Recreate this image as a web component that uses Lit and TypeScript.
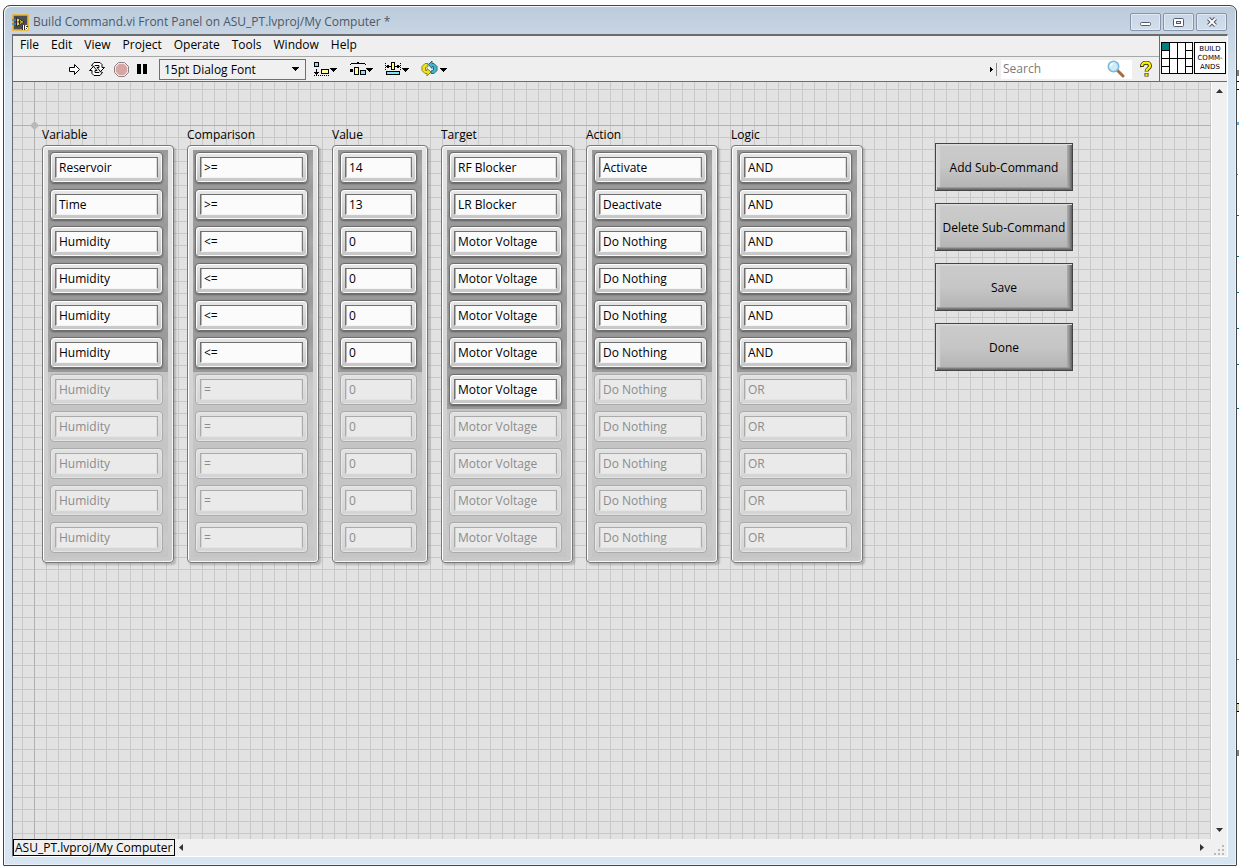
import { LitElement, html, css, svg } from "lit";
import { customElement, property } from "lit/decorators.js";

interface Column {
  id: string;
  label: string;
  narrow?: boolean;
  active: number;
  values: string[];
}

const fill = (first: string[], rest: [string, number][]): string[] => [
  ...first,
  ...rest.flatMap(([text, n]) => Array<string>(n).fill(text)),
];

const COLUMNS: Column[] = [
  { id: "variable", label: "Variable", active: 6, values: fill(["Reservoir", "Time"], [["Humidity", 9]]) },
  { id: "comparison", label: "Comparison", active: 6, values: fill([">=", ">="], [["<=", 4], ["=", 5]]) },
  { id: "value", label: "Value", narrow: true, active: 6, values: fill(["14", "13"], [["0", 9]]) },
  { id: "target", label: "Target", active: 7, values: fill(["RF Blocker", "LR Blocker"], [["Motor Voltage", 9]]) },
  { id: "action", label: "Action", active: 6, values: fill(["Activate", "Deactivate"], [["Do Nothing", 9]]) },
  { id: "logic", label: "Logic", active: 6, values: fill([], [["AND", 6], ["OR", 5]]) },
];

const MENUS = ["File", "Edit", "View", "Project", "Operate", "Tools", "Window", "Help"];
const COMMANDS = ["Add Sub-Command", "Delete Sub-Command", "Save", "Done"];

const caret = svg`<path d="M0 0h7v1h-1v1h-1v1h-1v1h-1v-1h-1v-1h-1v-1h-1z" fill="#000"/>`;

@customElement("array-column")
class ArrayColumn extends LitElement {
  @property({ attribute: false }) column!: Column;

  static styles = css`
    :host { display: block; font: 12px/20px "Open Sans", "Noto Sans", sans-serif; color: #000; }
    .label { height: 20px; white-space: nowrap; }
    .panel {
      box-sizing: border-box;
      width: 132px;
      padding: 4px 5px 5px;
      border: 1px solid #777;
      border-radius: 4px;
      background: linear-gradient(#e4e4e4, #c8c8c8);
      box-shadow: inset 1px 1px 0 #fff, inset -1px -1px 0 #f6f6f6, 2px 2px 2px #0003;
    }
    .narrow { width: 96px; }
    .cell {
      box-sizing: border-box;
      height: 37px;
      padding: 2px 5px 4px 2px;
      background: linear-gradient(#c4c4c4, #cacaca 50%, #c4c4c4);
    }
    .on { background: linear-gradient(#999, #a8a8a8 50%, #9a9a9a); }
    .bezel {
      box-sizing: border-box;
      height: 31px;
      padding: 4px;
      border: 1px solid #aaa;
      border-radius: 4px;
      background: linear-gradient(#e2e2e2, #d4d4d4);
      box-shadow: inset 1px 1px 0 #e8e8e8, inset -1px -1px 0 #e4e4e4;
    }
    .on .bezel {
      border-color: #6e6e6e;
      background: linear-gradient(#e8e8e8, #c6c6c6);
      box-shadow: inset 1px 1px 0 #fff, inset -1px -1px 0 #f8f8f8, 0 1px 2px #0006;
    }
    .field {
      display: block;
      box-sizing: border-box;
      width: 100%;
      height: 21px;
      margin: 0;
      padding: 0 3px;
      border: 1px solid;
      border-color: #aaa #aaa #e4e4e4 #aaa;
      border-radius: 0;
      background: #eaeaea;
      box-shadow: inset -1px 0 0 #e0e0e0, inset 1px 0 0 #d4d4d4;
      font: inherit;
      color: #8c8c8c;
      outline: 0;
    }
    .on .field {
      border-color: #707070 #777 #f4f4f4 #707070;
      background: #fbfbfb;
      box-shadow: inset -1px 0 0 #dcdcdc, inset 1px 0 0 #b4b4b4;
      color: #000;
    }
  `;

  render() {
    const { id, label, narrow, active, values } = this.column;
    return html`
      <div class="label" id=${id}>${label}</div>
      <div class="panel ${narrow ? "narrow" : ""}">
        ${values.map(
          (value, i) => html`
            <div class="cell ${i < active ? "on" : ""}">
              <div class="bezel">
                <input class="field" aria-labelledby=${id} .value=${value} ?disabled=${i >= active} />
              </div>
            </div>
          `
        )}
      </div>
    `;
  }
}

@customElement("app-root")
class AppRoot extends LitElement {
  static styles = css`
    :host {
      display: flex;
      position: relative;
      box-sizing: border-box;
      height: 100vh;
      padding: 5px 2px 2px 3px;
      background: #fff;
      font: 12px/20px "Open Sans", "Noto Sans", sans-serif;
      color: #000;
    }
    button, input, select { font: inherit; color: inherit; margin: 0; }
    button { padding: 0; border: 0; background: none; display: flex; align-items: center; justify-content: center; }
    svg { display: block; flex: none; }
    .edge { position: absolute; right: 0; top: 0; }
    .window {
      position: relative;
      flex: 1;
      min-width: 0;
      display: flex;
      flex-direction: column;
      padding: 0 8px;
      border: 1px solid #454545;
      border-radius: 7px 7px 1px 1px;
      background: linear-gradient(#bccbdb, #d7e4f1 72px);
      box-shadow: inset 1px 1px 0 #f4f8fc, inset -1px -1px 0 #eaf2fa;
    }
    .title { display: flex; align-items: center; box-sizing: border-box; height: 28px; padding-top: 4px; color: #4c5866; }
    .title-text { flex: 1; margin: 0 0 0 4px; font-size: 12px; font-weight: 400; white-space: nowrap; }
    .caption { display: flex; gap: 2px; margin-right: 1px; }
    .cap {
      box-sizing: border-box;
      width: 31px;
      height: 18px;
      border: 1px solid #8593ab;
      border-radius: 2px;
      background: linear-gradient(#c9d6e6, #d2deeb);
      box-shadow: inset 0 0 0 1px #e2ebf4;
    }
    .client {
      flex: 1;
      min-height: 0;
      display: flex;
      flex-direction: column;
      margin-bottom: 8px;
      border: 1px solid #fff;
      border-top: 2px solid #6c6c6c;
      border-left-color: #6c6c6c;
      background: #efefef;
    }
    .bars { display: flex; height: 46px; border-bottom: 1px solid #6c6c6c; box-sizing: border-box; }
    .bars-main { flex: 1; min-width: 0; border-right: 1px solid #6c6c6c; }
    .menu { display: flex; height: 21px; box-sizing: border-box; gap: 12px; padding-left: 7px; border-bottom: 1px solid #a8a8a8; line-height: 18px; }
    .menu button { height: 18px; }
    .tools { display: flex; align-items: center; height: 24px; padding-left: 55px; }
    .run { margin-right: 8px; }
    .loop { margin-right: 9px; }
    .stop { margin-right: 8px; }
    .pause { margin-right: 12px; }
    .font-box { position: relative; display: flex; align-items: center; margin-right: 7px; }
    .font {
      appearance: none;
      box-sizing: border-box;
      width: 147px;
      height: 21px;
      padding: 0 20px 0 4px;
      border: 1px solid #707070;
      border-radius: 0;
      background: #f0f0f0;
    }
    .font-caret { position: absolute; right: 7px; pointer-events: none; }
    .tool { margin-right: 12px; }
    .search-mark { margin-left: auto; margin-right: 4px; }
    .search { display: flex; align-items: center; width: 131px; height: 19px; background: #fff; }
    .search-input { flex: 1; min-width: 0; border: 0; padding: 0 2px; background: none; outline: 0; }
    .search-input::placeholder { color: #7a7a7a; opacity: 1; }
    .search-icon { margin-right: 7px; }
    .help { margin: 0 7px 0 8px; }
    .vi { display: flex; align-items: flex-start; gap: 1px; padding: 6px 1px 0; }
    .badge {
      box-sizing: border-box;
      width: 32px;
      height: 32px;
      padding-top: 2px;
      border: 1px solid #000;
      background: #fff;
      font: 7px/9px "DejaVu Sans", sans-serif;
      text-align: center;
      white-space: nowrap;
    }
    .body { flex: 1; min-height: 0; display: flex; }
    .canvas {
      position: relative;
      flex: 1;
      min-width: 0;
      display: flex;
      align-items: flex-start;
      box-sizing: border-box;
      padding: 43px 0 0 29px;
      gap: 13px;
      overflow: hidden;
      background:
        linear-gradient(#b0b0b0, #b0b0b0) 21px 0 / 1px 100% no-repeat,
        linear-gradient(#b0b0b0, #b0b0b0) 0 43px / 100% 1px no-repeat,
        linear-gradient(90deg, #c8c8c8 1px, transparent 1px) 9px 0 / 12px 12px,
        linear-gradient(#c8c8c8 1px, transparent 1px) 0 7px / 12px 12px,
        #e2e2e2;
    }
    .origin { position: absolute; left: 17px; top: 39px; }
    .commands { display: flex; flex-direction: column; gap: 12px; margin-left: 59px; padding-top: 18px; }
    .command {
      box-sizing: border-box;
      width: 138px;
      height: 48px;
      padding-top: 2px;
      border: 1px solid #444;
      background: linear-gradient(#cbcbcb, #c6c6c6 50%, #b2b2b2);
      box-shadow:
        inset 1px 1px 0 #ddd, inset -1px -1px 0 #6a6a6a, inset -2px -2px 0 #7c7c7c,
        inset -3px -2px 0 #8e8e8e, inset -4px -3px 0 #9c9c9c, inset -5px -3px 0 #a8a8a8, inset 4px 2px 1px #d4d4d4;
    }
    .vbar { display: flex; flex-direction: column; justify-content: space-between; align-items: center; width: 15px; padding: 7px 0; border-left: 1px solid #fff; background: #f0f0f0; }
    .foot { display: flex; align-items: center; height: 17px; background: #f0f0f0; }
    .context {
      box-sizing: border-box;
      height: 17px;
      padding: 0 1px;
      border: 1px solid #000;
      line-height: 15px;
      white-space: nowrap;
    }
    .hbar { flex: 1; display: flex; align-items: center; justify-content: space-between; padding: 0 4px; }
    .grip { margin-right: 2px; }
  `;

  render() {
    return html`
      <svg class="edge" width="3" height="868" shape-rendering="crispEdges">
        <path d="M1 70h2v6h-2zM1 750h2v6h-2zM1 174h1v1h-1z" fill="#808080" />
        <path d="M1 82h2v7h-2z" fill="#fffff0" /><path d="M1 81h2v1h-2zM1 89h2v1h-2z" />
        <path d="M1 122h2v3h-2z" fill="#5ab4f0" />
        <path d="M1 215h2v1h-2zM1 256h2v1h-2zM1 292h2v1h-2zM1 328h2v1h-2zM1 364h2v1h-2zM1 408h2v1h-2z" fill="#008080" />
        <path d="M1 704h2v7h-2z" fill="#d8d8b0" /><path d="M1 703h2v1h-2zM1 711h2v1h-2z" /><path d="M1 659h2v1h-2z" fill="#808080" />
      </svg>
      <main class="window">
        <header class="title">
          <svg class="vi-icon" width="17" height="17" viewBox="0 0 17 17">
            <path d="M1 1h15v15H1z" fill="#4b4f55" stroke="#f0b41c" stroke-width="1.6" />
            <path d="M0 6h4M0 10h4" stroke="#3b8fc4" stroke-width="1.4" />
            <path d="M4.5 3.500v9l8-4.500z" fill="#f8d44c" stroke="#2a2a2a" />
            <path d="M5.500 8h4M7.500 6v4" stroke="#222" />
            <path d="M10 11h6v5h-6z" fill="#333" />
            <path d="M11.500 11v5M15.500 11.500h-2v4h2v-2h-2" stroke="#fff" fill="none" />
          </svg>
          <h1 class="title-text">Build Command.vi Front Panel on ASU_PT.lvproj/My Computer *</h1>
          <div class="caption">
            <button class="cap" aria-label="Minimize">
              <svg width="11" height="10"><rect x=".5" y="5.500" width="10" height="3" rx="1" fill="#fff" stroke="#555b6b" /></svg>
            </button>
            <button class="cap" aria-label="Maximize">
              <svg width="11" height="9"><rect x=".5" y=".5" width="10" height="8" rx="1" fill="#fff" stroke="#555b6b" /><rect x="3.500" y="3.500" width="4" height="2" fill="#dce4ee" stroke="#555b6b" /></svg>
            </button>
            <button class="cap" aria-label="Close">
              <svg width="12" height="10"><path d="M2.500 1.500l7 7M9.500 1.500l-7 7" stroke="#555b6b" stroke-width="4" /><path d="M2.500 1.500l7 7M9.500 1.500l-7 7" stroke="#fff" stroke-width="1.800" /></svg>
            </button>
          </div>
        </header>
        <section class="client">
          <div class="bars">
            <div class="bars-main">
              <nav class="menu">${MENUS.map((m) => html`<button>${m}</button>`)}</nav>
              <div class="tools">
                <button class="run" aria-label="Run">
                  <svg width="13" height="13"><path d="M1.500 4.500h5v-3l5 5-5 5v-3h-5z" fill="#fff" stroke="#000" /></svg>
                </button>
                <button class="loop" aria-label="Run Continuously">
                  <svg width="16" height="14" viewBox="0 0 16 14">
                    <path d="M2.500 3.500l2.500-3h6l2 2v3h2.500l-4 4-3.500-4h2V3.500h-4l-1 1z" fill="#fff" stroke="#000" />
                    <path d="M13.500 10.500l-2.500 3H5l-2-2v-3H.5l4-4 3.500 4H6v2h4l1-1z" fill="#fff" stroke="#000" />
                  </svg>
                </button>
                <button class="stop" aria-label="Abort">
                  <svg width="15" height="15"><path d="M4.500.5h6l4 4v6l-4 4h-6l-4-4v-6z" fill="#f2e4e4" stroke="#8c8080" /><path d="M5 2h5l3 3v5l-3 3H5l-3-3V5z" fill="#d8a4a4" /></svg>
                </button>
                <button class="pause" aria-label="Pause">
                  <svg width="10" height="10"><path d="M0 0h4v10H0zM6 0h4v10H6z" /></svg>
                </button>
                <div class="font-box">
                  <select class="font" aria-label="Font"><option>15pt Dialog Font</option></select>
                  <svg class="font-caret" width="7" height="4" shape-rendering="crispEdges">${caret}</svg>
                </div>
                <button class="tool" aria-label="Align Objects">
                  <svg width="24" height="14" shape-rendering="crispEdges">
                    <rect x="1.500" y=".5" width="4" height="4" fill="#7fe4f4" stroke="#000" />
                    <path d="M3 7h1v3h2v1h-1v1h-1v1h-1v-1h-1v-1h-1v-1h2zM1 13h1v1h-1zM3 13h1v1h-1zM5 13h1v1h-1zM7 13h1v1h-1zM9 13h1v1h-1zM11 13h1v1h-1zM13 13h1v1h-1zM15 13h1v1h-1z" />
                    <rect x="8.500" y="7.500" width="7" height="4" fill="#ffff9c" stroke="#000" />
                    <g transform="translate(17 6)">${caret}</g>
                  </svg>
                </button>
                <button class="tool" aria-label="Distribute Objects">
                  <svg width="24" height="14" shape-rendering="crispEdges">
                    <path d="M1 2h1v-1h6v-1h2v1h6v1h1v1h-1v-1H2v1h-1zM1 7h3v3H1z" />
                    <rect x="5.500" y="5.500" width="4" height="7" fill="#ffff9c" stroke="#000" />
                    <rect x="11.500" y="8.500" width="5" height="4" fill="#7fe4f4" stroke="#000" />
                    <g transform="translate(17 6)">${caret}</g>
                  </svg>
                </button>
                <button class="tool" aria-label="Resize Objects">
                  <svg width="24" height="14" shape-rendering="crispEdges">
                    <path d="M0 1h1v1H0zM0 3h1v1H0zM0 5h1v1H0zM0 7h1v1H0zM15 1h1v1h-1zM15 3h1v1h-1zM15 5h1v1h-1zM15 7h1v1h-1zM1 4h5v1H1zM2 3h2v3H2zM10 4h5v1h-5zM12 3h2v3h-2z" />
                    <rect x="6.500" y=".5" width="3" height="7" fill="#ffff9c" stroke="#000" />
                    <rect x="1.500" y="9.500" width="13" height="3" fill="#7fe4f4" stroke="#000" />
                    <g transform="translate(17 6)">${caret}</g>
                  </svg>
                </button>
                <button class="tool" aria-label="Reorder">
                  <svg width="26" height="16">
                    <path d="M7 2.500L4 2.500 1 5.500v4l3 3h2v2.500l4-4-4-3.500v2H4.500V6.500L7 5.500z" fill="#f0e020" stroke="#8a8a10" />
                    <path d="M10 12.500h3l3-3v-4l-3-3h-2V0l-3.500 3.500 3.500 4V5.500h1.500v3.500L10 10z" fill="#48b4cc" stroke="#1c6c84" />
                    <g transform="translate(19 7)" shape-rendering="crispEdges">${caret}</g>
                  </svg>
                </button>
                <svg class="search-mark" width="7" height="13" shape-rendering="crispEdges"><path d="M0 4h1v1h1v1h1v1h-1v1h-1v1h-1z" /><path d="M6 0h1v13h-1z" fill="#888" /></svg>
                <div class="search">
                  <input class="search-input" aria-label="Search" placeholder="Search" />
                  <svg class="search-icon" width="18" height="18">
                    <path d="M10 10l6 6" stroke="#a86c38" stroke-width="3" stroke-linecap="round" />
                    <circle cx="6.500" cy="6.500" r="5.200" fill="#c8ecfc" stroke="#80b8dc" stroke-width="1.600" />
                    <path d="M3.500 6.500a3 3 0 0 1 3-3" stroke="#fff" stroke-width="1.500" fill="none" />
                  </svg>
                </div>
                <button class="help" aria-label="Help">
                  <svg width="12" height="16"><path d="M2 6c-.5-5.500 8-5.500 8-1 0 2.500-3.500 2.500-3.500 5.500M6.500 12v3.500" stroke="#3c3c00" stroke-width="4" fill="none" /><path d="M2 5c0-4.500 8-4.500 8 0 0 2.500-3.500 2.500-3.500 5M6.500 12.500v2.500" stroke="#fff000" stroke-width="2.200" fill="none" /></svg>
                </button>
              </div>
            </div>
            <div class="vi">
              <svg width="32" height="32" shape-rendering="crispEdges">
                <rect x=".5" y=".5" width="31" height="31" fill="#fff" stroke="#000" />
                <path d="M1 1h7v7H1z" fill="#008080" />
                <path d="M8.500 0v32M16.500 0v32M24.500 0v32M0 8.500h8M0 16.500h32M0 24.500h8M24 8.500h8M24 24.500h8" stroke="#000" />
              </svg>
              <div class="badge">BUILD<br />COMM-<br />ANDS</div>
            </div>
          </div>
          <div class="body">
            <div class="canvas">
              <svg class="origin" width="9" height="9"><path d="M4.500 0L9 4.500 4.500 9 0 4.500z" fill="#b8b8b8" /></svg>
              ${COLUMNS.map((c) => html`<array-column .column=${c}></array-column>`)}
              <div class="commands">${COMMANDS.map((c) => html`<button class="command">${c}</button>`)}</div>
            </div>
            <div class="vbar">
              <svg width="7" height="4"><path d="M0 4l3.500-4L7 4z" fill="#333" /></svg>
              <svg width="7" height="4"><path d="M0 0l3.500 4L7 0z" fill="#333" /></svg>
            </div>
          </div>
          <footer class="foot">
            <div class="context">ASU_PT.lvproj/My Computer</div>
            <div class="hbar">
              <svg width="4" height="7"><path d="M4 0L0 3.500 4 7z" fill="#333" /></svg>
              <svg width="4" height="7"><path d="M0 0l4 3.500L0 7z" fill="#333" /></svg>
            </div>
            <svg class="grip" width="17" height="15"><path d="M14 5h2v2h-2zM10 9h2v2h-2zM14 9h2v2h-2zM6 13h2v2H6zM10 13h2v2h-2zM14 13h2v2h-2z" fill="#bbb" /></svg>
          </footer>
        </section>
      </main>
    `;
  }
}
